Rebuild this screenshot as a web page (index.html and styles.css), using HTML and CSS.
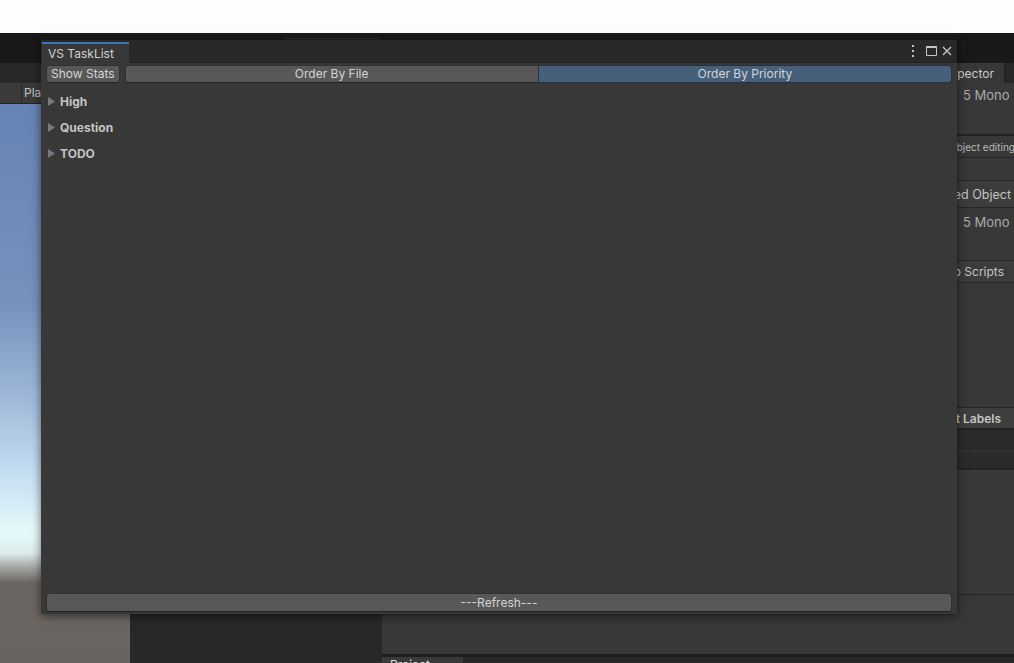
FILE: index.html
```html
<!DOCTYPE html>
<html lang="en">
<head>
    <meta charset="UTF-8">
    <title>VS TaskList</title>
    <link rel="stylesheet" href="styles.css">
</head>
<body>
    <div class="screen">
        <div class="top-band"></div>
        <div class="menu-strip">
            <div class="ghost-tabs"><span></span><span></span><span></span></div>
        </div>

        <div class="workspace">
            <div class="scene-tabs"></div>
            <div class="inspector-tabs">
                <div class="insp-tab"><span>Inspector</span></div>
            </div>
            <div class="scene-toolbar">
                <span class="tb-item tb-first"></span>
                <span class="tb-item tb-play">Play Focused</span>
            </div>
            <div class="scene-view"></div>
            <div class="hierarchy-panel"></div>

            <div class="inspector">
                <div class="insp-header"><span>5 Mono</span></div>
                <div class="insp-sep thick"></div>
                <div class="insp-row small"><span>Object editing</span></div>
                <div class="insp-sep"></div>
                <div class="insp-blank"></div>
                <div class="insp-sep"></div>
                <div class="insp-row title"><span>Selected Object</span></div>
                <div class="insp-sep"></div>
                <div class="insp-block"><span>5 Mono</span></div>
                <div class="insp-sep"></div>
                <div class="insp-row scripts"><span>Auto Scripts</span></div>
                <div class="insp-sep"></div>
                <div class="insp-space"></div>
                <div class="insp-sep"></div>
                <div class="insp-row labels"><span>Asset Labels</span></div>
                <div class="insp-sep thick"></div>
                <div class="insp-field"></div>
                <div class="insp-sep mid"></div>
                <div class="insp-field short"></div>
                <div class="insp-sep thick"></div>
            </div>

            <div class="bottom-panel"></div>
            <div class="bottom-bar"><span class="bottom-tab">Project</span></div>
        </div>

        <!-- floating editor window -->
        <div class="tasklist-window">
            <div class="win-header">
                <div class="win-tab">VS TaskList</div>
                <div class="win-icons">
                    <svg class="ic-menu" width="4" height="12" viewBox="0 0 4 12">
                        <rect x="1" y="0" width="2" height="2"/>
                        <rect x="1" y="5" width="2" height="2"/>
                        <rect x="1" y="10" width="2" height="2"/>
                    </svg>
                    <svg class="ic-max" width="11" height="10" viewBox="0 0 11 10">
                        <path d="M0.5 0.5 H10.5 V9.5 H0.5 Z" fill="none" stroke="#c4c4c4"/>
                        <rect x="0" y="0" width="11" height="2" fill="#c4c4c4"/>
                    </svg>
                    <svg class="ic-close" width="10" height="10" viewBox="0 0 10 10">
                        <path d="M1 1 L9 9 M9 1 L1 9" stroke="#c4c4c4" stroke-width="1.4"/>
                    </svg>
                </div>
            </div>

            <div class="win-toolbar">
                <button class="btn">Show Stats</button>
                <div class="order-group">
                    <button class="btn seg seg-left">Order By File</button>
                    <button class="btn seg seg-right selected">Order By Priority</button>
                </div>
            </div>

            <div class="task-tree">
                <div class="fold-row">
                    <svg class="fold-arrow" width="7" height="9" viewBox="0 0 7 9"><path d="M0 0 L7 4.5 L0 9 Z"/></svg>
                    <span>High</span>
                </div>
                <div class="fold-row">
                    <svg class="fold-arrow" width="7" height="9" viewBox="0 0 7 9"><path d="M0 0 L7 4.5 L0 9 Z"/></svg>
                    <span>Question</span>
                </div>
                <div class="fold-row">
                    <svg class="fold-arrow" width="7" height="9" viewBox="0 0 7 9"><path d="M0 0 L7 4.5 L0 9 Z"/></svg>
                    <span>TODO</span>
                </div>
            </div>

            <button class="btn refresh">---Refresh---</button>
        </div>
    </div>
</body>
</html>
```

FILE: styles.css
```css
* {
    box-sizing: border-box;
}

body {
    margin: 0;
    font-family: Inter, "Noto Sans", sans-serif;
    font-size: 12px;
    color: #c4c4c4;
    background-color: #191919;
}

.screen {
    position: relative;
    width: 1014px;
    height: 663px;
    overflow: hidden;
}

.top-band {
    height: 33px;
    background-color: #fdfdfd;
}

.menu-strip {
    height: 30px;
    background-color: #191919;
    padding: 5px 0 0 285px;
}

.ghost-tabs {
    display: flex;
}

.ghost-tabs span {
    width: 32px;
    height: 25px;
    background-color: #212121;
    border: 1px solid #262626;
    border-bottom: none;
}

/* Editor layout behind the floating window */
.workspace {
    display: grid;
    grid-template-columns: 130px 252px 575px 57px;
    grid-template-rows: 20px 21px 490px 60px 9px;
    height: 600px;
}

.scene-tabs {
    grid-column: 1 / 4;
    grid-row: 1;
    background-color: #282828;
}

.inspector-tabs {
    grid-column: 4;
    grid-row: 1;
    background-color: #282828;
    display: flex;
}

.insp-tab {
    width: 48px;
    height: 20px;
    background-color: #383838;
    border-right: 1px solid #1e1e1e;
    display: flex;
    justify-content: flex-end;
    align-items: center;
    padding-right: 10px;
    overflow: hidden;
    white-space: nowrap;
    color: #c8c8c8;
}

.scene-toolbar {
    grid-column: 1 / 4;
    grid-row: 2;
    background-color: #3a3a3a;
    border-bottom: 1px solid #232323;
    display: flex;
    line-height: 20px;
    white-space: nowrap;
}

.tb-item {
    padding-left: 2px;
}

.tb-play {
    width: 19px;
    overflow: hidden;
}

.tb-first {
    width: 22px;
    padding: 0;
    border-right: 1px solid #262626;
    margin: 1px 0;
}

.scene-view {
    grid-column: 1 / 4;
    grid-row: 3 / 6;
    background: linear-gradient(to bottom,
        #6583b3 0px,
        #7591bc 196px,
        #a0b9d9 296px,
        #c2dbf0 363px,
        #e6fafa 429px,
        #dcebec 449px,
        #9a9a98 466px,
        #6c6662 479px,
        #6a6460 100%);
}

.hierarchy-panel {
    grid-column: 2;
    grid-row: 4 / 6;
    background-color: #282828;
}

/* Inspector strip on the right */
.inspector {
    grid-column: 4;
    grid-row: 2 / 4;
    background-color: #383838;
    display: flex;
    flex-direction: column;
    overflow: hidden;
    white-space: nowrap;
}

.insp-header {
    height: 51px;
    padding: 4px 0 0 6px;
    font-size: 13px;
    line-height: 16px;
    color: #ababab;
}

.insp-sep {
    height: 1px;
    background-color: #262626;
}

.insp-sep.thick {
    height: 2px;
    background-color: #232323;
}

.insp-sep.mid {
    height: 2px;
    background-color: #303030;
}

.insp-row {
    display: flex;
    align-items: center;
    overflow: hidden;
}

.insp-row.small {
    height: 21px;
    font-size: 10px;
    color: #b8b8b8;
}

.insp-row.small span {
    margin-left: -8px;
}

.insp-blank {
    height: 22px;
}

.insp-row.title {
    height: 26px;
    justify-content: flex-end;
    padding-right: 3px;
    font-size: 12.5px;
    background-color: #3c3c3c;
}

.insp-block {
    height: 52px;
    padding: 6px 0 0 6px;
    font-size: 13px;
    line-height: 16px;
    color: #ababab;
}

.insp-row.scripts {
    height: 21px;
    justify-content: flex-end;
    padding-right: 10px;
    background-color: #3c3c3c;
}

.insp-space {
    height: 124px;
}

.insp-row.labels {
    height: 20px;
    justify-content: flex-end;
    padding-right: 13px;
    font-weight: 600;
    background-color: #3e3e3e;
}

.insp-field {
    height: 20px;
    background-color: #2a2a2a;
}

.insp-field.short {
    height: 16px;
}

.bottom-panel {
    grid-column: 3 / 5;
    grid-row: 4;
    background-color: #383838;
    border-top: 1px solid #232323;
}

.bottom-bar {
    grid-column: 3 / 5;
    grid-row: 5;
    background-color: #282828;
    border-top: 3px solid #1f1f1f;
    overflow: hidden;
}

.bottom-tab {
    display: block;
    width: 81px;
    height: 16px;
    padding-left: 8px;
    background-color: #3a3a3a;
    line-height: 16px;
    color: #e0e0e0;
}

/* Floating VS TaskList window */
.tasklist-window {
    position: absolute;
    left: 41px;
    top: 40px;
    width: 916px;
    height: 574px;
    background-color: #383838;
    display: flex;
    flex-direction: column;
    box-shadow: 0 2px 9px rgba(0, 0, 0, 0.55);
}

.win-header {
    height: 23px;
    background-color: #282828;
    border-bottom: 1px solid #222222;
    display: flex;
}

.win-tab {
    align-self: flex-end;
    margin: 0 0 -1px 1px;
    width: 87px;
    height: 21px;
    padding-left: 6px;
    background-color: #383838;
    border-top: 2px solid #3a78bd;
    line-height: 20px;
    color: #d2d2d2;
}

.win-icons {
    margin-left: auto;
    display: flex;
    align-items: center;
    padding-right: 5px;
}

.ic-menu {
    fill: #c4c4c4;
    margin-right: 11px;
}

.ic-max {
    margin-right: 5px;
}

.win-toolbar {
    display: flex;
    gap: 5px;
    padding: 2px 5px 0;
}

.btn {
    height: 18px;
    padding: 0 4px;
    font-family: inherit;
    font-size: 12px;
    line-height: 16px;
    color: #d4d4d4;
    background-color: #585858;
    border: 1px solid #303030;
    border-bottom-color: #242424;
    border-radius: 3px;
}

.order-group {
    flex: 1;
    display: flex;
}

.seg {
    flex: 1;
}

.seg-left {
    border-radius: 3px 0 0 3px;
}

.seg-right {
    border-left: none;
    border-radius: 0 3px 3px 0;
}

.btn.selected {
    background-color: #46607c;
    border-color: #27313d;
}

.task-tree {
    padding-top: 5px;
}

.fold-row {
    height: 26px;
    display: flex;
    align-items: center;
    padding-left: 7px;
    font-weight: 700;
    color: #c4c4c4;
}

.fold-arrow {
    fill: #7a7a7a;
    margin-right: 5px;
}

.refresh {
    margin: auto 5px 2px;
    height: 19px;
}
```
